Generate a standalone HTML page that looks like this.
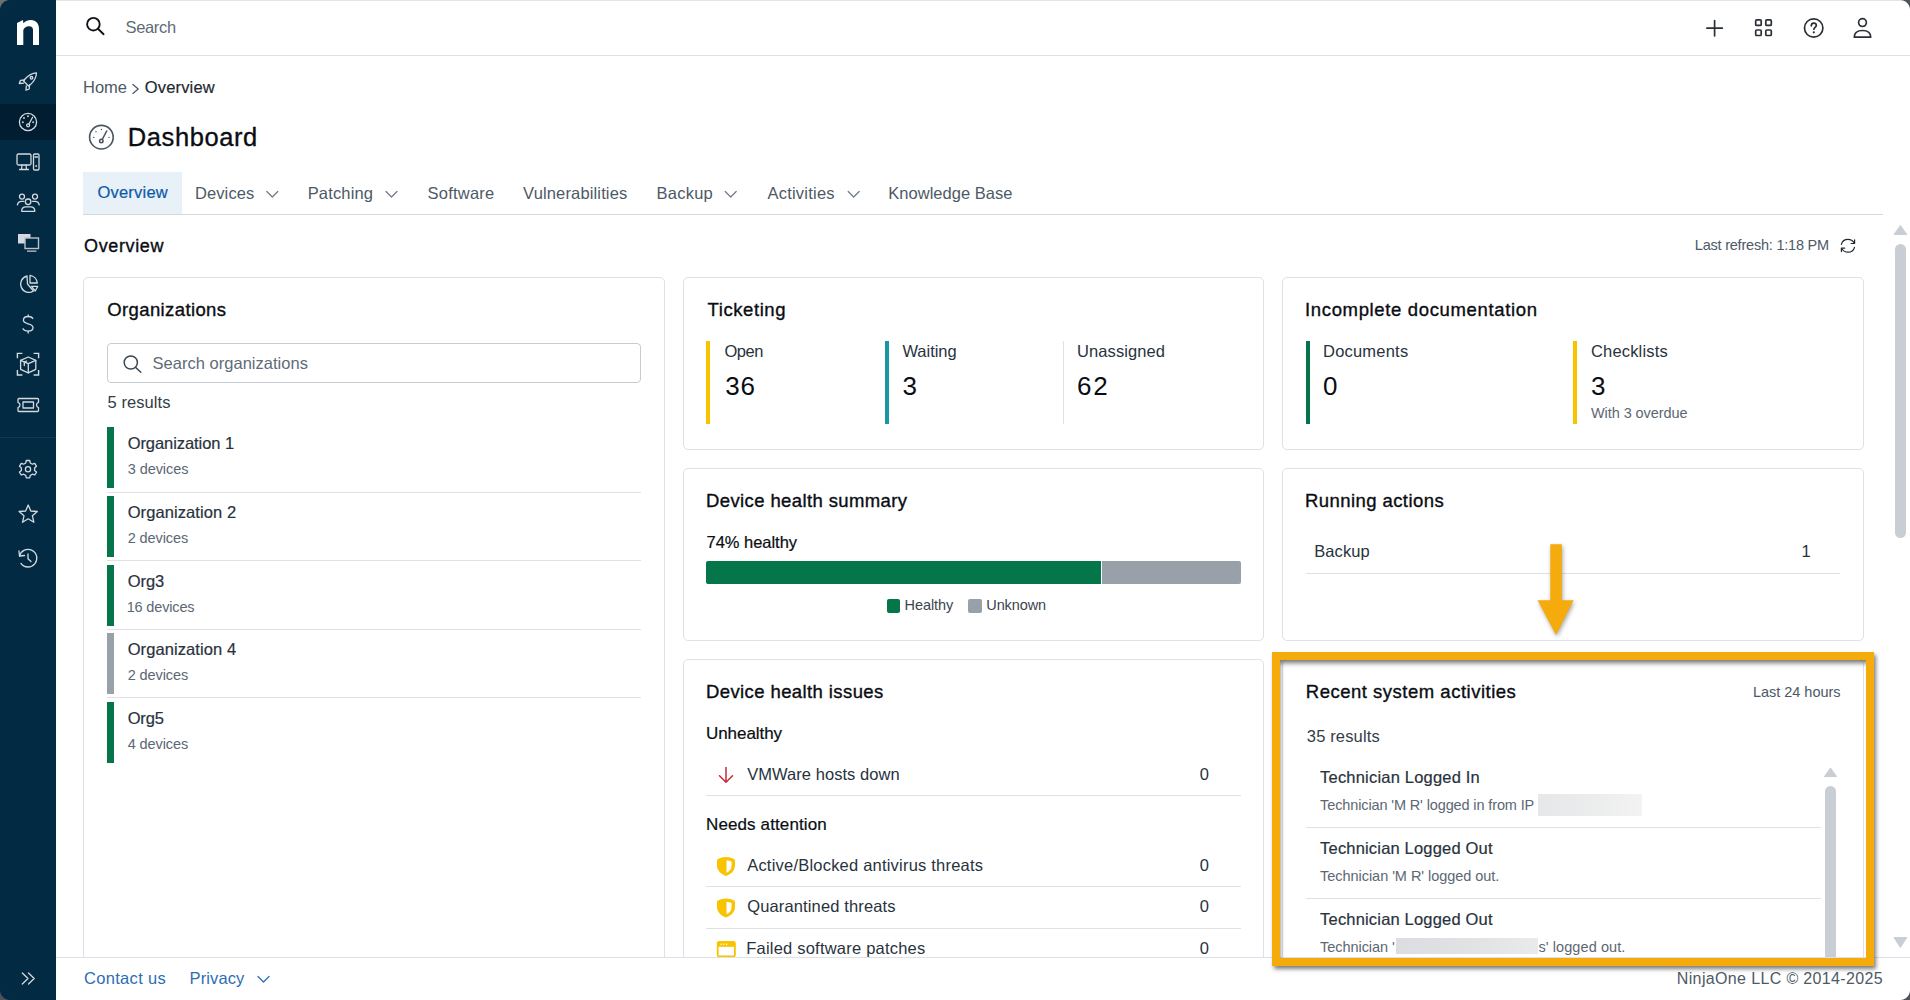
<!DOCTYPE html>
<html><head><meta charset="utf-8">
<style>
*{box-sizing:border-box;margin:0;padding:0}
html,body{width:1910px;height:1000px;overflow:hidden;background:#fff}
body{position:relative;font-family:"Liberation Sans",sans-serif;}
.abs{position:absolute}
.tx{position:absolute;white-space:nowrap;line-height:1;font-family:"Liberation Sans",sans-serif}
.card{position:absolute;background:#fff;border:1px solid #dde2e7;border-radius:5px}
.sep{position:absolute;height:1px;background:#dde2e7}
</style></head><body>
<div class="abs" style="left:0;top:0;width:56px;height:1000px;background:#022a43"></div>
<div class="abs" style="left:56px;top:0;width:1854px;height:1px;background:#e3e6e7"></div>
<div class="abs" style="left:56px;top:55px;width:1854px;height:1px;background:#dbe1e6"></div>

<svg class="abs" style="left:0;top:0" width="56" height="1000" viewBox="0 0 56 1000">
  <rect x="0" y="104" width="56" height="36" fill="#011d31"/>
  <line x1="0" y1="437.5" x2="56" y2="437.5" stroke="#0c3a5a" stroke-width="1"/>
  <!-- logo n -->
  <path d="M17 23 L23 20 L23.3 23.2 C25 21.3 27.5 20 31 20 C36 20 39 23.5 39 29 L39 45 L33 45 L33 30 C33 27.3 31.6 26.2 29.2 26.2 C26.3 26.2 23.3 28.2 23.3 31 L23.3 45 L17 45 Z" fill="#ffffff"/>
  <!-- rocket -->
  <g fill="none" stroke="#d3d9df" stroke-width="1.3" stroke-linecap="round" stroke-linejoin="round">
    <path d="M36.5 72.8 C32 73 28 75.5 25 79 L23.5 81 L28.5 86 L30.5 84.5 C34 81.5 36.3 77.5 36.5 72.8 Z"/>
    <circle cx="31.5" cy="77.8" r="1.3"/>
    <path d="M24.5 80 L20.5 80.3 L19.3 83.5 L23.5 83.2"/>
    <path d="M29.5 85 L29.2 89 L26 90.2 L26.3 86"/>
  </g>
  <!-- gauge -->
  <g fill="none" stroke="#d3d9df" stroke-width="1.3" stroke-linecap="round" stroke-linejoin="round">
    <circle cx="28" cy="122" r="8.6"/>
    <circle cx="28.1" cy="125.3" r="1.5"/>
    <path d="M29 124 L32.6 117.3"/>
    <circle cx="28" cy="116.3" r="0.35" fill="#d3d9df"/>
    <circle cx="24" cy="118" r="0.35" fill="#d3d9df"/>
    <circle cx="22.8" cy="122.3" r="0.35" fill="#d3d9df"/>
    <circle cx="33.2" cy="122.3" r="0.35" fill="#d3d9df"/>
  </g>
  <!-- devices -->
  <g fill="none" stroke="#d3d9df" stroke-width="1.3" stroke-linecap="round" stroke-linejoin="round">
    <rect x="17" y="154" width="14" height="11" rx="1.5"/>
    <path d="M22 165 L21.5 169.5 M26 165 L26.5 169.5 M19.5 169.5 L28.5 169.5"/>
    <rect x="33.5" y="154" width="5.5" height="16" rx="1.2"/>
    <path d="M35 157 L37.5 157"/>
    <circle cx="36.2" cy="166" r="0.3" fill="#d3d9df"/>
  </g>
  <!-- people -->
  <g fill="none" stroke="#d3d9df" stroke-width="1.3" stroke-linecap="round" stroke-linejoin="round">
    <circle cx="22" cy="196.6" r="2.5"/>
    <circle cx="35" cy="196.6" r="2.5"/>
    <circle cx="28.1" cy="201.8" r="2.8"/>
    <path d="M17.4 204.8 C17.8 202.6 19.4 201.3 21.5 201.3 L23.8 201.3"/>
    <path d="M39.2 204.8 C38.8 202.6 37.2 201.3 35.1 201.3 L32.5 201.3"/>
    <path d="M21.7 211.3 L34.8 211.3 C34.8 208.6 33.2 206.9 30.6 206.9 L25.9 206.9 C23.3 206.9 21.7 208.6 21.7 211.3 Z"/>
  </g>
  <!-- monitors -->
  <g>
    <rect x="18" y="234" width="12.5" height="9.5" fill="#d3d9df"/>
    <rect x="25" y="238" width="13.5" height="10.5" fill="#022a43" stroke="#b9c1c9" stroke-width="1.4"/>
    <rect x="27" y="250.5" width="9.5" height="1.3" fill="#b9c1c9"/>
  </g>
  <!-- pie -->
  <g fill="none" stroke="#d3d9df" stroke-width="1.3" stroke-linecap="round" stroke-linejoin="round">
    <path d="M27 276 A8.3 8.3 0 1 0 33.5 291 L27.5 284 Z"/>
    <path d="M30 275.3 A8.5 8.5 0 0 1 37.3 283 L30 283 Z"/>
    <path d="M31.5 286.3 L37.8 286.3 L35.3 291 Z"/>
  </g>
  <!-- dollar -->
  <g fill="none" stroke="#d3d9df" stroke-width="1.3" stroke-linecap="round" stroke-linejoin="round">
    <path d="M32.8 318.5 C32 317 30.3 316.5 28.2 316.5 C25.5 316.5 23.4 318 23.4 320.3 C23.4 325 33 322.5 33 327.5 C33 330 31 331.2 28.2 331.2 C25.8 331.2 23.8 330.3 23 328.8"/>
    <path d="M28.2 315 L28.2 316.5 M28.2 331.2 L28.2 333"/>
  </g>
  <!-- box -->
  <g fill="none" stroke="#d3d9df" stroke-width="1.3" stroke-linecap="round" stroke-linejoin="round">
    <path d="M17.4 358.3 L17.4 353.4 L22.4 353.4 M33.6 353.4 L38.6 353.4 L38.6 358.3 M38.6 370 L38.6 375 L33.6 375 M22.4 375 L17.4 375 L17.4 370" stroke-linecap="butt" stroke-linejoin="miter" stroke-width="1.4"/>
    <path d="M28.3 357 L35.8 360.4 L35.8 369.3 L28.3 372.8 L20.6 369.3 L20.6 360.4 Z"/>
    <path d="M20.6 360.4 L28.3 363.6 L35.8 360.4 M28.3 363.6 L28.3 372.8"/>
    <path d="M24.3 365.5 L24.3 362 L26.6 361"/>
  </g>
  <!-- ticket -->
  <g fill="none" stroke="#d3d9df" stroke-width="1.3" stroke-linecap="round" stroke-linejoin="round">
    <path d="M19 398.5 L37.5 398.5 Q38.5 398.5 38.5 399.5 L38.5 402.3 Q36.5 403 36.5 405 Q36.5 407 38.5 407.7 L38.5 410.5 Q38.5 411.5 37.5 411.5 L19 411.5 Q18 411.5 18 410.5 L18 407.7 Q20 407 20 405 Q20 403 18 402.3 L18 399.5 Q18 398.5 19 398.5 Z"/>
    <rect x="23" y="402" width="10.5" height="6"/>
  </g>
  <!-- gear -->
  <g fill="none" stroke="#d3d9df" stroke-width="1.3" stroke-linecap="round" stroke-linejoin="round">
    <path d="M26.3 460.5 L29.7 460.5 L30.3 463 L32.4 464.2 L34.8 463.4 L36.5 466.3 L34.6 468 L34.6 470.4 L36.5 472.1 L34.8 475 L32.4 474.2 L30.3 475.4 L29.7 477.9 L26.3 477.9 L25.7 475.4 L23.6 474.2 L21.2 475 L19.5 472.1 L21.4 470.4 L21.4 468 L19.5 466.3 L21.2 463.4 L23.6 464.2 L25.7 463 Z"/>
    <circle cx="28" cy="469.2" r="2.6"/>
  </g>
  <!-- star -->
  <g fill="none" stroke="#d3d9df" stroke-width="1.3" stroke-linecap="round" stroke-linejoin="round">
    <path d="M28.2 505 L30.8 511 L37.3 511.5 L32.4 515.8 L33.9 522.3 L28.2 518.8 L22.5 522.3 L24 515.8 L19.1 511.5 L25.6 511 Z"/>
  </g>
  <!-- history -->
  <g fill="none" stroke="#d3d9df" stroke-width="1.3" stroke-linecap="round" stroke-linejoin="round">
    <path d="M19.5 556 A8.8 8.8 0 1 1 21 563.5"/>
    <path d="M19 551 L19.5 556 L24.5 555.5"/>
    <path d="M28 554 L28 558.7 L31 561.5"/>
  </g>
  <!-- expand >> -->
  <g fill="none" stroke="#d3d9df" stroke-width="1.3" stroke-linecap="round" stroke-linejoin="round" stroke-width="1.2">
    <path d="M22.3 973 L28 978.5 L22.3 984 M28.5 973 L34.2 978.5 L28.5 984"/>
  </g>
</svg>
<!-- top search icon -->
<svg class="abs" style="left:80px;top:10px" width="32" height="32" viewBox="80 10 32 32">
  <circle cx="93.4" cy="24.2" r="6.3" fill="none" stroke="#111418" stroke-width="1.9"/>
  <path d="M98 28.8 L103.6 34.2" stroke="#111418" stroke-width="1.9" stroke-linecap="round"/>
</svg>
<!-- top right icons -->
<svg class="abs" style="left:1690px;top:8px" width="200" height="40" viewBox="1690 8 200 40">
  <g fill="none" stroke="#2b3036" stroke-width="1.7" stroke-linecap="round" stroke-linejoin="round">
    <path d="M1714.6 20.5 L1714.6 35.8 M1706.9 28.2 L1722.3 28.2"/>
    <rect x="1755.7" y="19.9" width="5.5" height="5.5" rx="1"/>
    <rect x="1765.8" y="19.9" width="5.5" height="5.5" rx="1"/>
    <rect x="1755.7" y="30" width="5.5" height="5.5" rx="1"/>
    <rect x="1765.8" y="30" width="5.5" height="5.5" rx="1"/>
    <circle cx="1813.7" cy="28" r="9.2"/>
    <path d="M1811.3 25.8 C1811.3 24.2 1812.4 23.2 1813.8 23.2 C1815.3 23.2 1816.3 24.2 1816.3 25.4 C1816.3 27.2 1813.9 27.4 1813.9 29.2"/>
    <circle cx="1862.5" cy="22.6" r="3.9"/>
    <path d="M1854.3 37.2 C1854.3 32.6 1857.8 30.5 1862.5 30.5 C1867.2 30.5 1870.7 32.6 1870.7 37.2 Z"/>
  </g>
  <circle cx="1813.8" cy="32.3" r="1.1" fill="#2b3036"/>
</svg>
<svg class="abs" style="left:128px;top:80px" width="14" height="16" viewBox="128 80 14 16">
  <path d="M132.9 84.4 L138.2 89 L132.9 93.4" fill="none" stroke="#4d5966" stroke-width="1.3" stroke-linecap="round" stroke-linejoin="round"/>
</svg>
<!-- dashboard title icon -->
<svg class="abs" style="left:86px;top:122px" width="30" height="30" viewBox="86 122 30 30">
  <g fill="none" stroke="#4a5560" stroke-width="1.6" stroke-linecap="round">
    <circle cx="101.4" cy="137.2" r="11.8"/>
    <circle cx="101.3" cy="141" r="1.7"/>
    <path d="M102.2 139.5 L106.7 131"/>
  </g>
  <g fill="#4a5560">
    <circle cx="101.4" cy="129.5" r="0.7"/><circle cx="96" cy="131.8" r="0.7"/><circle cx="93.8" cy="137.4" r="0.7"/><circle cx="109" cy="137.4" r="0.7"/>
  </g>
</svg>
<!-- tabs -->
<div class="abs" style="left:83px;top:172px;width:99px;height:42px;background:#e8f0f8"></div>
<div class="abs" style="left:83px;top:214px;width:1800px;height:1px;background:#d3d9df"></div>
<svg class="abs" style="left:0;top:180px" width="1100" height="30" viewBox="0 180 1100 30">
  <g fill="none" stroke="#6f7987" stroke-width="1.2" stroke-linecap="round" stroke-linejoin="round">
    <path d="M266.8 191.5 L272.3 197 L277.8 191.5"/>
    <path d="M386 191.5 L391.5 197 L397 191.5"/>
    <path d="M725.2 191.5 L730.7 197 L736.2 191.5"/>
    <path d="M848.2 191.5 L853.7 197 L859.2 191.5"/>
  </g>
</svg>
<!-- refresh icon -->
<svg class="abs" style="left:1836px;top:234px" width="24" height="24" viewBox="1836 234 24 24">
  <g fill="none" stroke="#23282e" stroke-width="1.2" stroke-linecap="round" stroke-linejoin="round">
    <path d="M1841.4 244.3 C1842.2 241.2 1844.8 239.3 1848 239.3 C1850.8 239.3 1853 240.8 1854.2 243"/>
    <path d="M1854.6 239.9 L1854.6 243.5 L1851.1 243.5"/>
    <path d="M1854.5 247.3 C1853.7 250.3 1851.2 252.2 1848 252.2 C1845.5 252.2 1843.3 251 1842 249"/>
    <path d="M1841.4 251.6 L1841.4 248.2 L1844.7 248.2"/>
  </g>
</svg>
<!-- main scrollbar -->
<svg class="abs" style="left:1888px;top:220px" width="22" height="735" viewBox="1888 220 22 735">
  <path d="M1894 234.5 L1900.4 225.5 L1906.8 234.5 Z" fill="#c9ced5" stroke="#c9ced5" stroke-width="1" stroke-linejoin="round"/>
  <rect x="1895" y="244" width="11" height="294" rx="5.5" fill="#c9ced5"/>
  <path d="M1894 937.5 L1900.4 947.5 L1906.8 937.5 Z" fill="#c9ced5" stroke="#c9ced5" stroke-width="1" stroke-linejoin="round"/>
</svg>

<!-- cards -->
<div class="card" style="left:83px;top:277px;width:582px;height:720px"></div>
<div class="card" style="left:683px;top:277px;width:581px;height:173px"></div>
<div class="card" style="left:1282px;top:277px;width:582px;height:173px"></div>
<div class="card" style="left:683px;top:468px;width:581px;height:173px"></div>
<div class="card" style="left:1282px;top:468px;width:582px;height:173px"></div>
<div class="card" style="left:683px;top:659px;width:581px;height:340px"></div>
<div class="card" style="left:1282px;top:659px;width:582px;height:340px"></div>

<!-- org card content -->
<div class="abs" style="left:107px;top:343px;width:534px;height:40px;border:1px solid #c5ccd3;border-radius:4px"></div>
<svg class="abs" style="left:118px;top:350px" width="28" height="28" viewBox="118 350 28 28">
  <circle cx="130.8" cy="362.5" r="6.6" fill="none" stroke="#3c4650" stroke-width="1.5"/>
  <path d="M135.5 367.3 L140.8 372.3" stroke="#3c4650" stroke-width="1.5" stroke-linecap="round"/>
</svg>
<div class="abs" style="left:107px;top:427px;width:7px;height:61px;background:#04764a"></div>
<div class="abs" style="left:107px;top:496px;width:7px;height:61px;background:#04764a"></div>
<div class="abs" style="left:107px;top:565px;width:7px;height:61px;background:#04764a"></div>
<div class="abs" style="left:107px;top:633px;width:7px;height:61px;background:#98a1aa"></div>
<div class="abs" style="left:107px;top:702px;width:7px;height:61px;background:#04764a"></div>
<div class="sep" style="left:107px;top:492px;width:534px"></div>
<div class="sep" style="left:107px;top:560px;width:534px"></div>
<div class="sep" style="left:107px;top:629px;width:534px"></div>
<div class="sep" style="left:107px;top:697px;width:534px"></div>
<!-- ticketing -->
<div class="abs" style="left:706px;top:341px;width:4px;height:83px;background:#f9c300"></div>
<div class="abs" style="left:885px;top:341px;width:4px;height:83px;background:#1697a6"></div>
<div class="abs" style="left:1063px;top:341px;width:1px;height:83px;background:#dde2e7"></div>
<div class="abs" style="left:1306px;top:341px;width:4px;height:83px;background:#04754a"></div>
<div class="abs" style="left:1573px;top:341px;width:4px;height:83px;background:#f9c300"></div>
<!-- health bar -->
<div class="abs" style="left:706px;top:561px;width:395px;height:23px;background:#04764a;border-radius:2px 0 0 2px"></div>
<div class="abs" style="left:1102px;top:561px;width:139px;height:23px;background:#98a1aa;border-radius:0 2px 2px 0"></div>
<div class="abs" style="left:887px;top:599px;width:13px;height:14px;background:#04764a;border-radius:2px"></div>
<div class="abs" style="left:968px;top:599px;width:14px;height:14px;background:#98a1aa;border-radius:2px"></div>
<!-- running actions -->
<div class="sep" style="left:1306px;top:573px;width:534px"></div>
<!-- device health issues -->
<div class="sep" style="left:706px;top:795px;width:535px"></div>
<div class="sep" style="left:706px;top:886px;width:535px"></div>
<div class="sep" style="left:706px;top:928px;width:535px"></div>
<svg class="abs" style="left:710px;top:760px" width="200" height="200" viewBox="710 760 200 200">
  <g fill="none" stroke="#c8283b" stroke-width="1.5" stroke-linecap="round" stroke-linejoin="round">
    <path d="M726 767.5 L726 782 M719.5 775.7 L726 782.2 L732.5 775.7"/>
  </g>
  <path d="M726 857 C728.8 857 731.8 857.8 734.3 859.2 C734.8 859.5 735 860 735 860.6 L735 865.5 C735 870.5 731 874.3 726 876 C721 874.3 717 870.5 717 865.5 L717 860.6 C717 860 717.2 859.5 717.7 859.2 C720.2 857.8 723.2 857 726 857 Z" fill="#f9c300"/>
  <path d="M726.5 860.3 C728.3 860.4 730 860.9 731.6 861.6 L731.6 865.5 C731.6 869 729.5 871.5 726.5 872.8 Z" fill="#fff"/>
  <path d="M726 898.5 C728.8 898.5 731.8 899.3 734.3 900.7 C734.8 901 735 901.5 735 902.1 L735 907 C735 912 731 915.8 726 917.5 C721 915.8 717 912 717 907 L717 902.1 C717 901.5 717.2 901 717.7 900.7 C720.2 899.3 723.2 898.5 726 898.5 Z" fill="#f9c300"/>
  <path d="M726.5 901.8 C728.3 901.9 730 902.4 731.6 903.1 L731.6 907 C731.6 910.5 729.5 913 726.5 914.3 Z" fill="#fff"/>
  <rect x="717.7" y="942" width="17.2" height="14.5" rx="1.5" fill="none" stroke="#f9c300" stroke-width="1.8"/>
  <rect x="717.7" y="942" width="17.2" height="4.8" fill="#f9c300"/><circle cx="721" cy="944.3" r="0.75" fill="#fff"/><circle cx="723.8" cy="944.3" r="0.75" fill="#fff"/><circle cx="726.6" cy="944.3" r="0.75" fill="#fff"/>
</svg>
<!-- recent activities -->
<div class="sep" style="left:1306px;top:827px;width:515px"></div>
<div class="sep" style="left:1306px;top:898px;width:515px"></div>
<div class="abs" style="left:1538px;top:794px;width:104px;height:22px;background:linear-gradient(90deg,#e6e7e9,#eceded 60%,#f3f3f4)"></div>
<div class="abs" style="left:1396px;top:938px;width:142px;height:16px;background:linear-gradient(90deg,#dcdde0,#e2e3e5 60%,#e9eaeb)"></div>
<svg class="abs" style="left:1820px;top:762px" width="22" height="200" viewBox="1820 762 22 200">
  <path d="M1824.5 776.5 L1830.5 768 L1836.5 776.5 Z" fill="#c9ced5" stroke="#c9ced5" stroke-width="1" stroke-linejoin="round"/>
  <rect x="1825" y="786" width="11" height="200" rx="5.5" fill="#c9ced5"/>
</svg>
<!-- footer -->
<div class="abs" style="left:56px;top:957px;width:1854px;height:43px;background:#fff;border-top:1px solid #dbe1e6"></div>
<svg class="abs" style="left:250px;top:970px" width="24" height="20" viewBox="250 970 24 20">
  <path d="M258 976.5 L263.5 982 L269 976.5" fill="none" stroke="#2d6db3" stroke-width="1.3" stroke-linecap="round" stroke-linejoin="round"/>
</svg>
<!-- orange highlight -->
<div class="abs" style="left:1272px;top:652px;width:602px;height:314px;border:8px solid #f6ab0c;box-shadow:2px 3px 4px rgba(0,0,0,0.5), inset 2px 5px 5px -2px rgba(0,0,0,0.55)"></div>
<!-- arrow -->
<svg class="abs" style="left:1530px;top:540px;filter:drop-shadow(1px 2px 2px rgba(0,0,0,0.35))" width="50" height="100" viewBox="1530 540 50 100">
  <path d="M1550.3 544.3 L1561.8 544.3 L1561.8 600.3 L1573.6 600.3 L1556 635 L1537.6 600.3 L1550.3 600.3 Z" fill="#f6ab0c"/>
</svg>
<div class="tx" id="t0" style="left:125.50px;top:19.21px;font-size:16.5px;color:#5f6b77;letter-spacing:-0.341px;font-weight:400;">Search</div>
<div class="tx" id="t1" style="left:83.00px;top:79.11px;font-size:16.5px;color:#4d5966;letter-spacing:-0.012px;font-weight:400;">Home</div>
<div class="tx" id="t2" style="left:144.70px;top:79.11px;font-size:16.5px;color:#1f2831;letter-spacing:0.179px;font-weight:400;-webkit-text-stroke:0.2px currentColor;">Overview</div>
<div class="tx" id="t3" style="left:127.80px;top:125.10px;font-size:25.5px;color:#0a0d12;letter-spacing:0.592px;font-weight:400;-webkit-text-stroke:0.35px currentColor;">Dashboard</div>
<div class="tx" id="t4" style="left:97.40px;top:183.90px;font-size:16.5px;color:#0c5aa6;letter-spacing:0.222px;font-weight:400;-webkit-text-stroke:0.2px currentColor;">Overview</div>
<div class="tx" id="t5" style="left:195.00px;top:184.82px;font-size:16.5px;color:#4d5966;letter-spacing:0.094px;font-weight:400;">Devices</div>
<div class="tx" id="t6" style="left:307.70px;top:184.82px;font-size:16.5px;color:#4d5966;letter-spacing:0.152px;font-weight:400;">Patching</div>
<div class="tx" id="t7" style="left:427.60px;top:184.82px;font-size:16.5px;color:#4d5966;letter-spacing:0.209px;font-weight:400;">Software</div>
<div class="tx" id="t8" style="left:523.10px;top:184.82px;font-size:16.5px;color:#4d5966;letter-spacing:0.146px;font-weight:400;">Vulnerabilities</div>
<div class="tx" id="t9" style="left:656.60px;top:184.82px;font-size:16.5px;color:#4d5966;letter-spacing:0.228px;font-weight:400;">Backup</div>
<div class="tx" id="t10" style="left:767.50px;top:184.82px;font-size:16.5px;color:#4d5966;letter-spacing:0.217px;font-weight:400;">Activities</div>
<div class="tx" id="t11" style="left:888.30px;top:184.82px;font-size:16.5px;color:#4d5966;letter-spacing:0.026px;font-weight:400;">Knowledge Base</div>
<div class="tx" id="t12" style="left:84.00px;top:237.01px;font-size:18px;color:#0a0d12;letter-spacing:0.641px;font-weight:400;-webkit-text-stroke:0.35px currentColor;">Overview</div>
<div class="tx" id="t13" style="left:1694.80px;top:238.00px;font-size:14.5px;color:#4d5966;letter-spacing:-0.217px;font-weight:400;">Last refresh: 1:18 PM</div>
<div class="tx" id="t14" style="left:107.20px;top:300.51px;font-size:18.5px;color:#0a0d12;letter-spacing:0.392px;font-weight:400;-webkit-text-stroke:0.35px currentColor;">Organizations</div>
<div class="tx" id="t15" style="left:152.60px;top:354.71px;font-size:16.5px;color:#5f6b77;letter-spacing:0.018px;font-weight:400;">Search organizations</div>
<div class="tx" id="t16" style="left:107.50px;top:394.21px;font-size:16.5px;color:#333d48;letter-spacing:0.074px;font-weight:400;">5 results</div>
<div class="tx" id="t17" style="left:127.70px;top:435.01px;font-size:16.5px;color:#28323d;letter-spacing:-0.072px;font-weight:400;-webkit-text-stroke:0.2px currentColor;">Organization 1</div>
<div class="tx" id="t18" style="left:127.70px;top:462.00px;font-size:14.5px;color:#5c6773;letter-spacing:-0.063px;font-weight:400;">3 devices</div>
<div class="tx" id="t19" style="left:127.70px;top:503.80px;font-size:16.5px;color:#28323d;letter-spacing:0.089px;font-weight:400;-webkit-text-stroke:0.2px currentColor;">Organization 2</div>
<div class="tx" id="t20" style="left:127.70px;top:530.81px;font-size:14.5px;color:#5c6773;letter-spacing:-0.088px;font-weight:400;">2 devices</div>
<div class="tx" id="t21" style="left:127.70px;top:572.61px;font-size:16.5px;color:#28323d;letter-spacing:-0.068px;font-weight:400;-webkit-text-stroke:0.2px currentColor;">Org3</div>
<div class="tx" id="t22" style="left:126.70px;top:599.60px;font-size:14.5px;color:#5c6773;letter-spacing:-0.163px;font-weight:400;">16 devices</div>
<div class="tx" id="t23" style="left:127.70px;top:641.40px;font-size:16.5px;color:#28323d;letter-spacing:0.089px;font-weight:400;-webkit-text-stroke:0.2px currentColor;">Organization 4</div>
<div class="tx" id="t24" style="left:127.70px;top:668.41px;font-size:14.5px;color:#5c6773;letter-spacing:-0.088px;font-weight:400;">2 devices</div>
<div class="tx" id="t25" style="left:127.70px;top:710.21px;font-size:16.5px;color:#28323d;letter-spacing:-0.168px;font-weight:400;-webkit-text-stroke:0.2px currentColor;">Org5</div>
<div class="tx" id="t26" style="left:127.70px;top:737.20px;font-size:14.5px;color:#5c6773;letter-spacing:-0.088px;font-weight:400;">4 devices</div>
<div class="tx" id="t27" style="left:707.60px;top:301.01px;font-size:18.5px;color:#0a0d12;letter-spacing:0.569px;font-weight:400;-webkit-text-stroke:0.35px currentColor;">Ticketing</div>
<div class="tx" id="t28" style="left:724.50px;top:342.90px;font-size:16.5px;color:#28323d;letter-spacing:-0.462px;font-weight:400;">Open</div>
<div class="tx" id="t29" style="left:725.20px;top:372.71px;font-size:26px;color:#0a0d12;letter-spacing:0.940px;font-weight:400;">36</div>
<div class="tx" id="t30" style="left:902.40px;top:342.90px;font-size:16.5px;color:#28323d;letter-spacing:-0.022px;font-weight:400;">Waiting</div>
<div class="tx" id="t31" style="left:902.40px;top:372.71px;font-size:26px;color:#0a0d12;letter-spacing:0.000px;font-weight:400;">3</div>
<div class="tx" id="t32" style="left:1077.00px;top:342.90px;font-size:16.5px;color:#28323d;letter-spacing:0.093px;font-weight:400;">Unassigned</div>
<div class="tx" id="t33" style="left:1077.00px;top:372.71px;font-size:26px;color:#0a0d12;letter-spacing:1.840px;font-weight:400;">62</div>
<div class="tx" id="t34" style="left:1305.00px;top:301.01px;font-size:18.5px;color:#0a0d12;letter-spacing:0.652px;font-weight:400;-webkit-text-stroke:0.35px currentColor;">Incomplete documentation</div>
<div class="tx" id="t35" style="left:1323.00px;top:342.90px;font-size:16.5px;color:#28323d;letter-spacing:0.212px;font-weight:400;">Documents</div>
<div class="tx" id="t36" style="left:1323.00px;top:372.71px;font-size:26px;color:#0a0d12;letter-spacing:0.000px;font-weight:400;">0</div>
<div class="tx" id="t37" style="left:1591.00px;top:342.90px;font-size:16.5px;color:#28323d;letter-spacing:0.163px;font-weight:400;">Checklists</div>
<div class="tx" id="t38" style="left:1591.00px;top:372.71px;font-size:26px;color:#0a0d12;letter-spacing:0.000px;font-weight:400;">3</div>
<div class="tx" id="t39" style="left:1591.00px;top:406.20px;font-size:14.5px;color:#5c6773;letter-spacing:-0.074px;font-weight:400;">With 3 overdue</div>
<div class="tx" id="t40" style="left:706.00px;top:491.81px;font-size:18.5px;color:#0a0d12;letter-spacing:0.388px;font-weight:400;-webkit-text-stroke:0.35px currentColor;">Device health summary</div>
<div class="tx" id="t41" style="left:706.50px;top:533.81px;font-size:16.5px;color:#0a0d12;letter-spacing:-0.026px;font-weight:400;-webkit-text-stroke:0.2px currentColor;">74% healthy</div>
<div class="tx" id="t42" style="left:904.60px;top:598.01px;font-size:14.5px;color:#3a444f;letter-spacing:-0.086px;font-weight:400;">Healthy</div>
<div class="tx" id="t43" style="left:986.30px;top:598.01px;font-size:14.5px;color:#3a444f;letter-spacing:-0.114px;font-weight:400;">Unknown</div>
<div class="tx" id="t44" style="left:1305.00px;top:491.81px;font-size:18.5px;color:#0a0d12;letter-spacing:0.427px;font-weight:400;-webkit-text-stroke:0.35px currentColor;">Running actions</div>
<div class="tx" id="t45" style="left:1314.20px;top:543.32px;font-size:16.5px;color:#28323d;letter-spacing:0.088px;font-weight:400;">Backup</div>
<div class="tx" id="t46" style="left:1801.50px;top:543.32px;font-size:16.5px;color:#28323d;letter-spacing:0.000px;font-weight:400;">1</div>
<div class="tx" id="t47" style="left:706.00px;top:683.01px;font-size:18.5px;color:#0a0d12;letter-spacing:0.399px;font-weight:400;-webkit-text-stroke:0.35px currentColor;">Device health issues</div>
<div class="tx" id="t48" style="left:706.00px;top:725.10px;font-size:17px;color:#0a0d12;letter-spacing:-0.056px;font-weight:400;-webkit-text-stroke:0.2px currentColor;">Unhealthy</div>
<div class="tx" id="t49" style="left:747.20px;top:766.00px;font-size:16.5px;color:#28323d;letter-spacing:0.054px;font-weight:400;">VMWare hosts down</div>
<div class="tx" id="t50" style="left:1199.80px;top:766.00px;font-size:16.5px;color:#28323d;letter-spacing:0.000px;font-weight:400;">0</div>
<div class="tx" id="t51" style="left:706.00px;top:815.60px;font-size:17px;color:#0a0d12;letter-spacing:0.119px;font-weight:400;-webkit-text-stroke:0.2px currentColor;">Needs attention</div>
<div class="tx" id="t52" style="left:747.20px;top:856.82px;font-size:16.5px;color:#28323d;letter-spacing:0.212px;font-weight:400;">Active/Blocked antivirus threats</div>
<div class="tx" id="t53" style="left:1199.80px;top:856.82px;font-size:16.5px;color:#28323d;letter-spacing:0.000px;font-weight:400;">0</div>
<div class="tx" id="t54" style="left:747.20px;top:897.81px;font-size:16.5px;color:#28323d;letter-spacing:0.139px;font-weight:400;">Quarantined threats</div>
<div class="tx" id="t55" style="left:1199.80px;top:897.81px;font-size:16.5px;color:#28323d;letter-spacing:0.000px;font-weight:400;">0</div>
<div class="tx" id="t56" style="left:746.20px;top:939.51px;font-size:16.5px;color:#28323d;letter-spacing:0.218px;font-weight:400;">Failed software patches</div>
<div class="tx" id="t57" style="left:1199.80px;top:939.51px;font-size:16.5px;color:#28323d;letter-spacing:0.000px;font-weight:400;">0</div>
<div class="tx" id="t58" style="left:1305.80px;top:683.01px;font-size:18.5px;color:#0a0d12;letter-spacing:0.506px;font-weight:400;-webkit-text-stroke:0.35px currentColor;">Recent system activities</div>
<div class="tx" id="t59" style="left:1752.90px;top:684.81px;font-size:14.5px;color:#4d5966;letter-spacing:-0.018px;font-weight:400;">Last 24 hours</div>
<div class="tx" id="t60" style="left:1306.80px;top:727.82px;font-size:16.5px;color:#333d48;letter-spacing:0.157px;font-weight:400;">35 results</div>
<div class="tx" id="t61" style="left:1320.10px;top:769.01px;font-size:16.5px;color:#28323d;letter-spacing:0.196px;font-weight:400;-webkit-text-stroke:0.2px currentColor;">Technician Logged In</div>
<div class="tx" id="t62" style="left:1320.10px;top:798.00px;font-size:14.5px;color:#5c6773;letter-spacing:-0.125px;font-weight:400;">Technician 'M R' logged in from IP</div>
<div class="tx" id="t63" style="left:1320.10px;top:839.90px;font-size:16.5px;color:#28323d;letter-spacing:0.180px;font-weight:400;-webkit-text-stroke:0.2px currentColor;">Technician Logged Out</div>
<div class="tx" id="t64" style="left:1320.10px;top:868.91px;font-size:14.5px;color:#5c6773;letter-spacing:-0.045px;font-weight:400;">Technician 'M R' logged out.</div>
<div class="tx" id="t65" style="left:1320.10px;top:910.60px;font-size:16.5px;color:#28323d;letter-spacing:0.180px;font-weight:400;-webkit-text-stroke:0.2px currentColor;">Technician Logged Out</div>
<div class="tx" id="t66" style="left:1320.10px;top:939.61px;font-size:14.5px;color:#5c6773;letter-spacing:-0.058px;font-weight:400;">Technician '</div>
<div class="tx" id="t67" style="left:1538.50px;top:939.61px;font-size:14.5px;color:#5c6773;letter-spacing:0.079px;font-weight:400;">s' logged out.</div>
<div class="tx" id="t68" style="left:84.00px;top:970.21px;font-size:16.5px;color:#2d6db3;letter-spacing:0.308px;font-weight:400;">Contact us</div>
<div class="tx" id="t69" style="left:189.60px;top:970.21px;font-size:16.5px;color:#2d6db3;letter-spacing:0.093px;font-weight:400;">Privacy</div>
<div class="tx" id="t70" style="left:1676.80px;top:970.81px;font-size:16px;color:#4d5966;letter-spacing:0.357px;font-weight:400;">NinjaOne LLC © 2014-2025</div>
<!-- window corners -->
<div class="abs" style="left:0;top:0;width:10px;height:10px;background:radial-gradient(circle at 10px 10px, transparent 9.5px, #6f6f6f 10.5px)"></div>
<div class="abs" style="right:0;top:0;width:10px;height:10px;background:radial-gradient(circle at 0 10px, transparent 9.5px, #505259 10.5px)"></div>
<div class="abs" style="left:0;bottom:0;width:10px;height:10px;background:radial-gradient(circle at 10px 0, transparent 9.5px, #505259 10.5px)"></div>
<div class="abs" style="right:0;bottom:0;width:10px;height:10px;background:radial-gradient(circle at 0 0, transparent 9.5px, #505259 10.5px)"></div>
</body></html>
